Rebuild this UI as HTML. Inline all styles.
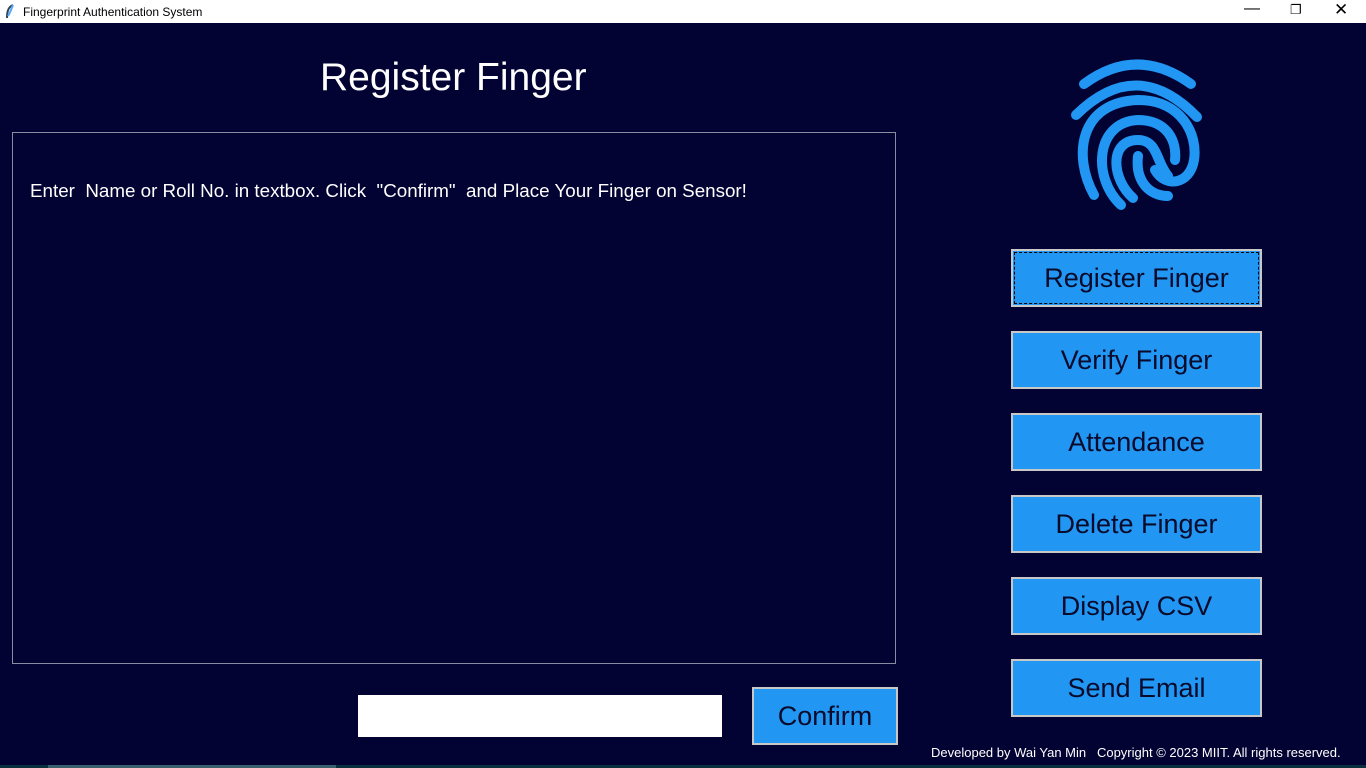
<!DOCTYPE html>
<html><head><meta charset="utf-8"><style>
*{margin:0;padding:0;box-sizing:border-box}
body{width:1366px;height:768px;background:#020233;font-family:"Liberation Sans",sans-serif;position:relative;overflow:hidden}
.tb{position:absolute;left:0;top:0;width:1366px;height:23px;background:#fff;font-size:12px;color:#000}
.tb span{position:absolute;left:23px;top:5px}
.title{position:absolute;left:320px;top:56px;color:#fff;font-size:39px}
.box{position:absolute;left:12px;top:132px;width:884px;height:532px;border:1px solid #8a8aa0}
.msg{position:absolute;left:30px;top:180px;color:#fff;font-size:18.8px}
.btn{position:absolute;left:1011px;width:251px;height:58px;background:#2196f3;border:2px solid #c8c8c8;color:#0a0a2a;font-size:27px;text-align:center;line-height:55px}
.inp{position:absolute;left:358px;top:695px;width:364px;height:42px;background:#fff}
.foot{position:absolute;left:931px;top:745px;color:#fff;font-size:13px}
.bar{position:absolute;left:0;top:765px;width:1366px;height:3px;background:#0a3040}
</style></head><body>
<div class="tb"><svg style="position:absolute;left:5px;top:4px" width="10" height="15"><path d="M8 1 C3 3 2 8 2 14" stroke="#345" stroke-width="2" fill="none"/><path d="M8 1 C6 6 5 9 3 12" stroke="#5af" stroke-width="2" fill="none"/></svg><span>Fingerprint Authentication System</span>
<span style="left:1244px;top:0;font-size:16px">&#8212;</span>
<span style="left:1290px;top:2px;font-size:13px">&#10064;</span>
<span style="left:1334px;top:0;font-size:17px">&#10005;</span></div>
<div class="title">Register Finger</div>
<div class="box"></div>
<div class="msg">Enter&nbsp; Name or Roll No. in textbox. Click&nbsp; "Confirm"&nbsp; and Place Your Finger on Sensor!</div>
<svg style="position:absolute;left:0;top:0" width="1366" height="768" fill="none" stroke="#2196f3" stroke-width="10" stroke-linecap="round">
<path d="M1084,84 Q1137,45 1191,84"/>
<path d="M1076,115 Q1137,55 1197,117"/>
<path d="M1094,195 C1072,155 1080,102 1138,100 C1182,100 1198,135 1194,160 C1190,185 1165,188 1155,170"/>
<path d="M1121,205 C1092,178 1095,122 1138,120 C1168,120 1177,142 1175,160"/>
<path d="M1133,198 C1112,180 1108,140 1138,140 C1158,140 1156,162 1168,176"/>
<path d="M1138,156 C1135,182 1150,196 1168,196"/>
</svg>
<div class="btn" style="top:249px"><div style="position:absolute;inset:1px;border:1px dashed #000"></div>Register Finger</div>
<div class="btn" style="top:331px">Verify Finger</div>
<div class="btn" style="top:413px">Attendance</div>
<div class="btn" style="top:495px">Delete Finger</div>
<div class="btn" style="top:577px">Display CSV</div>
<div class="btn" style="top:659px">Send Email</div>
<div class="inp"></div>
<div class="btn" style="left:752px;top:687px;width:146px">Confirm</div>
<div class="foot">Developed by Wai Yan Min &nbsp; Copyright © 2023 MIIT. All rights reserved.</div>
<div class="bar"><div style="position:absolute;left:48px;width:288px;height:3px;background:#3a6070"></div></div>
</body></html>
